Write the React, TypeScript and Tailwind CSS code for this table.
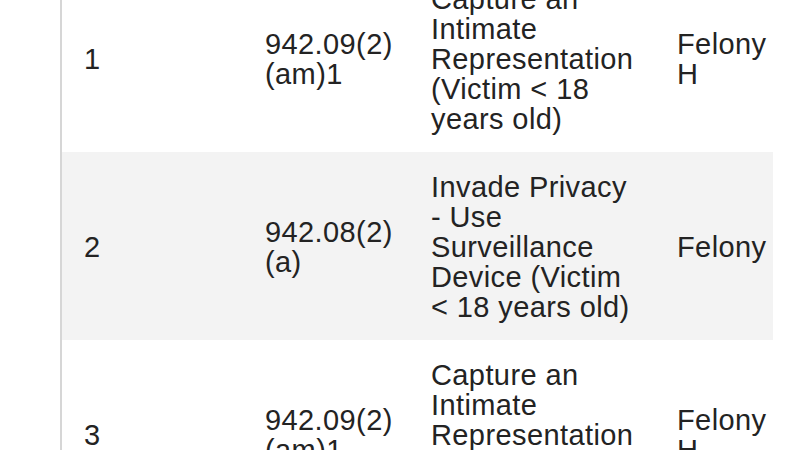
type Row = {
  n: string
  code: string[]
  desc: string
  level: string
}

const rows: Row[] = [
  { n: "1", code: ["942.09(2)", "(am)1"], desc: "Capture an Intimate Representation (Victim < 18 years old)", level: "Felony H" },
  { n: "2", code: ["942.08(2)", "(a)"], desc: "Invade Privacy - Use Surveillance Device (Victim < 18 years old)", level: "Felony" },
  { n: "3", code: ["942.09(2)", "(am)1"], desc: "Capture an Intimate Representation (Victim < 18 years old)", level: "Felony H" },
]

export default function App() {
  return (
    <div
      className="w-[800px] h-[450px] overflow-hidden bg-white text-[#232323]"
      style={{ fontFamily: '"Liberation Sans", Arial, sans-serif' }}
    >
      <div className="ml-[60px] -mt-[36px] w-[713px] border-l-2 border-[#d6d6d6]">
        {rows.map((r, i) => (
          <div
            key={r.n}
            className={`flex items-center h-[188px] pt-[2px] text-[29px] leading-[30px] tracking-[0.4px] ${i % 2 === 1 ? "bg-[#f3f3f3]" : "bg-white"}`}
          >
            <div className="w-[181px] pl-[22px]">{r.n}</div>
            <div className="w-[166px] pl-[22px]">
              {r.code.map((c) => (
                <div key={c}>{c}</div>
              ))}
            </div>
            <div className="w-[246px] pl-[22px]">
              <div className="w-[205px]">{r.desc}</div>
            </div>
            <div className="w-[118px] pl-[22px]">
              <div className="w-[92px]">{r.level}</div>
            </div>
          </div>
        ))}
      </div>
    </div>
  )
}
